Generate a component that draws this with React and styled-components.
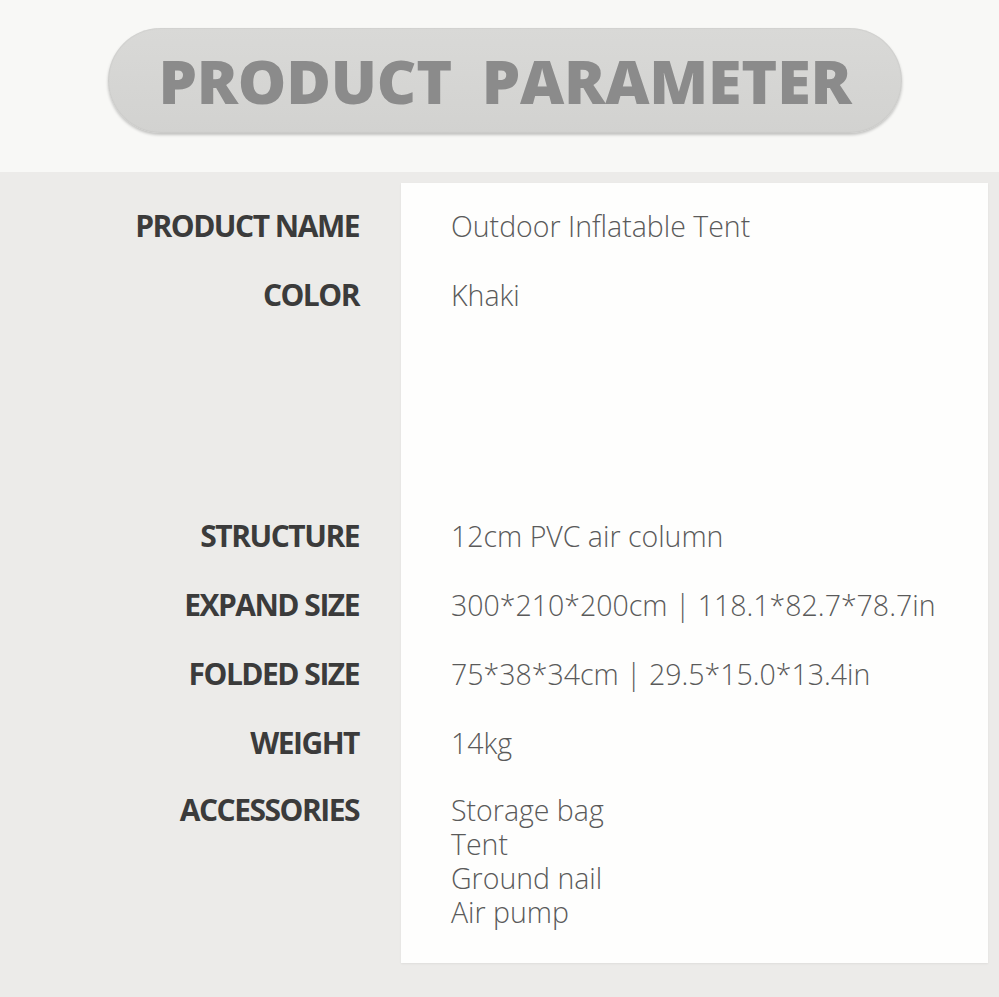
import React from 'react';
import styled, { createGlobalStyle } from 'styled-components';

const GlobalStyle = createGlobalStyle`
  html, body {
    margin: 0;
    padding: 0;
    background: #ecebe9;
  }
`;

const Page = styled.div`
  width: 999px;
  height: 997px;
  overflow: hidden;
  background: #ecebe9;
`;

const Header = styled.div`
  height: 172px;
  background: #f8f8f6;
  padding: 28px 0 0 108px;
  box-sizing: border-box;
`;

const Pill = styled.div`
  width: 794px;
  height: 105px;
  border-radius: 53px;
  background: linear-gradient(180deg, #d9d9d7 0%, #d2d2d0 100%);
  box-shadow: 0 2px 3px rgba(0, 0, 0, 0.22), inset 0 0 2px rgba(0, 0, 0, 0.12);
  display: flex;
  align-items: center;
  justify-content: center;
`;

const Title = styled.h1`
  margin: 0 0 0 0;
  font-family: "Open Sans", "Liberation Sans", sans-serif;
  font-weight: 800;
  font-size: 61px;
  letter-spacing: -0.2px;
  word-spacing: 14px;
  color: #8b8b8b;
`;

const Body = styled.div`
  display: flex;
  padding-top: 11px;
`;

const LabelCol = styled.div`
  width: 401px;
  padding-top: 8px;
`;

const ValuePanel = styled.div`
  width: 587px;
  height: 780px;
  background: #fefefd;
  padding-top: 8px;
  box-sizing: border-box;
  box-shadow: 0 1px 2px rgba(0, 0, 0, 0.06);
`;

const Row = styled.div`
  height: ${p => (p.$multi ? 'auto' : '69px')};
  margin-top: ${p => p.$gap || 0}px;
  padding-top: ${p => (p.$multi ? '16px' : '0')};
  display: flex;
  flex-direction: column;
  justify-content: ${p => (p.$multi ? 'flex-start' : 'center')};
  box-sizing: border-box;
`;

const Label = styled.div`
  font-family: "Open Sans", "Liberation Sans", sans-serif;
  font-weight: 700;
  font-size: 30px;
  line-height: 34px;
  letter-spacing: -1.5px;
  color: #3b3b3b;
  text-align: right;
  padding-right: 42px;
`;

const Value = styled.div`
  font-family: "Open Sans", "Liberation Sans", sans-serif;
  font-weight: 300;
  font-size: 28.5px;
  line-height: 34px;
  color: #5a5a5a;
  padding-left: 50px;
`;

const rows = [
  { label: 'PRODUCT NAME', values: ['Outdoor Inflatable Tent'] },
  { label: 'COLOR', values: ['Khaki'] },
  { label: 'STRUCTURE', values: ['12cm PVC air column'], gap: 172 },
  { label: 'EXPAND SIZE', values: ['300*210*200cm | 118.1*82.7*78.7in'] },
  { label: 'FOLDED SIZE', values: ['75*38*34cm | 29.5*15.0*13.4in'] },
  { label: 'WEIGHT', values: ['14kg'] },
  { label: 'ACCESSORIES', values: ['Storage bag', 'Tent', 'Ground nail', 'Air pump'] },
];

const App = () => {
  return (
    <Page>
      <GlobalStyle />
      <Header>
        <Pill>
          <Title>PRODUCT PARAMETER</Title>
        </Pill>
      </Header>
      <Body>
        <LabelCol>
          {rows.map(r => (
            <Row key={r.label} $gap={r.gap} $multi={r.values.length > 1}>
              <Label>{r.label}</Label>
            </Row>
          ))}
        </LabelCol>
        <ValuePanel>
          {rows.map(r => (
            <Row key={r.label} $gap={r.gap} $multi={r.values.length > 1}>
              <Value>
                {r.values.map((v, i) => (
                  <React.Fragment key={v}>
                    {i > 0 && <br />}
                    {v}
                  </React.Fragment>
                ))}
              </Value>
            </Row>
          ))}
        </ValuePanel>
      </Body>
    </Page>
  );
};

export default App;
